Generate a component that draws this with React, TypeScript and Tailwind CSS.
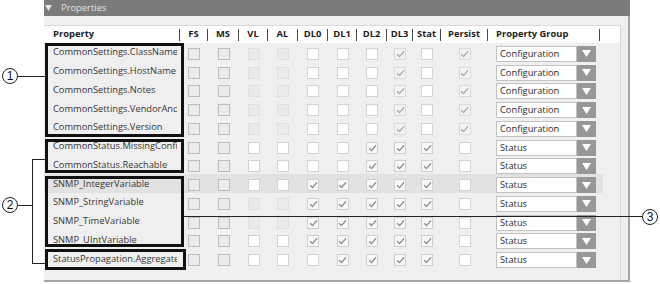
import React from "react";

type Row = { name: string; boxes: string; group: string; hi?: boolean };

const cols = [
  { label: "FS", w: "w-[28px]" },
  { label: "MS", w: "w-[31px]" },
  { label: "VL", w: "w-[29px]" },
  { label: "AL", w: "w-[30px]" },
  { label: "DL0", w: "w-[30px]" },
  { label: "DL1", w: "w-[29px]" },
  { label: "DL2", w: "w-[30px]" },
  { label: "DL3", w: "w-[26px]" },
  { label: "Stat", w: "w-[28px]" },
  { label: "Persist", w: "w-[47px]" },
];

// g = grey (read only), d = disabled, w = empty, c = checked, x = checked + disabled
const rows: Row[] = [
  { name: "CommonSettings.ClassName", boxes: "ggddwwwxwx", group: "Configuration" },
  { name: "CommonSettings.HostName", boxes: "ggddwwwxwx", group: "Configuration" },
  { name: "CommonSettings.Notes", boxes: "ggddwwwxwx", group: "Configuration" },
  { name: "CommonSettings.VendorAndModel", boxes: "ggddwwwxwx", group: "Configuration" },
  { name: "CommonSettings.Version", boxes: "ggddwwwxwx", group: "Configuration" },
  { name: "CommonStatus.MissingConfiguration", boxes: "ggwwwwcccw", group: "Status" },
  { name: "CommonStatus.Reachable", boxes: "ggwwwwcccw", group: "Status" },
  { name: "SNMP_IntegerVariable", boxes: "ggwwcccccw", group: "Status", hi: true },
  { name: "SNMP_StringVariable", boxes: "ggddcccccw", group: "Status" },
  { name: "SNMP_TimeVariable", boxes: "ggddcccccw", group: "Status" },
  { name: "SNMP_UIntVariable", boxes: "ggwwcccccw", group: "Status" },
  { name: "StatusPropagation.AggregatedStatus", boxes: "ggwwwccccw", group: "Status" },
];

const boxStyles: Record<string, string> = {
  g: "bg-[#ebebeb] border-[#bdbdbd]",
  d: "bg-[#e9eaea] border-[#dfdfdf]",
  w: "bg-white border-[#d3d3d3]",
  c: "bg-[#f8f8f8] border-[#cfcfcf]",
  x: "bg-[#f3f3f3] border-[#dadada]",
};

function Box({ kind }: { kind: string }) {
  return (
    <span className={`mt-[3px] w-[12px] h-[12px] border flex items-center justify-center ${boxStyles[kind]}`}>
      {(kind === "c" || kind === "x") && (
        <svg width="9" height="8" viewBox="0 0 9 8">
          <path
            d="M1.2 4.3 L3.5 6.6 L8 1.3"
            fill="none"
            stroke={kind === "c" ? "#878787" : "#a6a6a6"}
            strokeWidth="1.3"
          />
        </svg>
      )}
    </span>
  );
}

function Sep() {
  return <span className="w-px h-[12px] bg-[#4a4a4a] shrink-0" />;
}

function Callout({ n, className }: { n: string; className: string }) {
  return (
    <div
      className={`absolute w-[16px] h-[16px] rounded-full border border-[#222] bg-white flex items-center justify-center font-['Liberation_Sans',sans-serif] text-[12px] leading-none text-[#111] ${className}`}
    >
      {n}
    </div>
  );
}

export default function App() {
  return (
    <div className="relative w-[660px] h-[284px] bg-white overflow-hidden font-['Open_Sans',sans-serif]">
      <div className="flex">
        <div className="w-[44px] shrink-0" />

        {/* Properties panel */}
        <div className="w-[586px] h-[282px] shrink-0 flex flex-col">
          <div className="h-[16px] bg-[#7b7b7b] flex items-center">
            <svg width="7" height="6" viewBox="0 0 7 6" className="ml-[1px]">
              <path d="M0 0H7L3.5 6Z" fill="#e6e6e6" />
            </svg>
            <span className="ml-[9px] text-[9.4px] text-[#e2e2e2] leading-none">Properties</span>
          </div>

          <div className="flex-1 bg-[#efefef] pt-[9px] pr-[7px] border-r-2 border-b-2 border-[#a6a6a6] flex">
            <div className="w-[577px] border-r border-[#d6d6d6] flex flex-col">
              {/* header */}
              <div className="h-[18px] bg-white border-t border-[#dadada] flex text-[9.4px] font-bold text-[#1c1c1c]">
                <div className="w-[136px] flex items-center">
                  <span className="flex-1 pl-[9px]">Property</span>
                  <Sep />
                </div>
                {cols.map((c) => (
                  <div key={c.label} className={`${c.w} flex items-center`}>
                    <span className="flex-1 text-center">{c.label}</span>
                    <Sep />
                  </div>
                ))}
                <div className="w-[112px] flex items-center">
                  <span className="flex-1 pl-[8px]">Property Group</span>
                  <Sep />
                </div>
              </div>

              {/* rows */}
              {rows.map((r) => (
                <div key={r.name} className={`w-[559px] h-[18.75px] flex ${r.hi ? "bg-[#e2e2e2]" : ""}`}>
                  <div className="w-[136px] pl-[9px] flex items-center">
                    <span className="w-[124px] overflow-hidden whitespace-nowrap text-[9.3px] text-[#363636]">
                      {r.name}
                    </span>
                  </div>
                  {cols.map((c, i) => (
                    <div key={c.label} className={`${c.w} flex items-center justify-center`}>
                      <Box kind={r.boxes[i]} />
                    </div>
                  ))}
                  <div className="w-[115px] flex items-end">
                    <div className="ml-[8px] w-[100px] h-[16px] flex">
                      <div className="flex-1 bg-white border border-[#c2c2c2] flex items-center pl-[3px] text-[9.3px] text-[#2c2c2c]">
                        {r.group}
                      </div>
                      <div className="w-[19px] bg-[#979797] flex items-center justify-center">
                        <svg width="9" height="7" viewBox="0 0 9 7">
                          <path d="M0 0H9L4.5 7Z" fill="#ffffff" />
                        </svg>
                      </div>
                    </div>
                  </div>
                </div>
              ))}
            </div>
          </div>
        </div>
      </div>

      {/* annotation boxes */}
      <div className="absolute left-[45px] top-[43px] w-[139px] h-[94px] border-[3px] border-[#111]" />
      <div className="absolute left-[45px] top-[139px] w-[139px] h-[34px] border-[3px] border-[#111]" />
      <div className="absolute left-[45px] top-[176px] w-[139px] h-[71px] border-[3px] border-[#111]" />
      <div className="absolute left-[45px] top-[249px] w-[141px] h-[21px] border-[3px] border-[#111]" />

      {/* leader lines */}
      <div className="absolute left-[18px] top-[76px] w-[27px] h-px bg-[#222]" />
      <div className="absolute left-[18px] top-[205px] w-[14px] h-px bg-[#222]" />
      <div className="absolute left-[32px] top-[159px] w-px h-[105px] bg-[#222]" />
      <div className="absolute left-[32px] top-[159px] w-[13px] h-px bg-[#222]" />
      <div className="absolute left-[32px] top-[263px] w-[13px] h-px bg-[#222]" />
      <div className="absolute left-[184px] top-[216px] w-[458px] h-px bg-[#222]" />

      <Callout n="1" className="left-[2px] top-[68px]" />
      <Callout n="2" className="left-[2px] top-[197px]" />
      <Callout n="3" className="left-[642px] top-[209px]" />
    </div>
  );
}
